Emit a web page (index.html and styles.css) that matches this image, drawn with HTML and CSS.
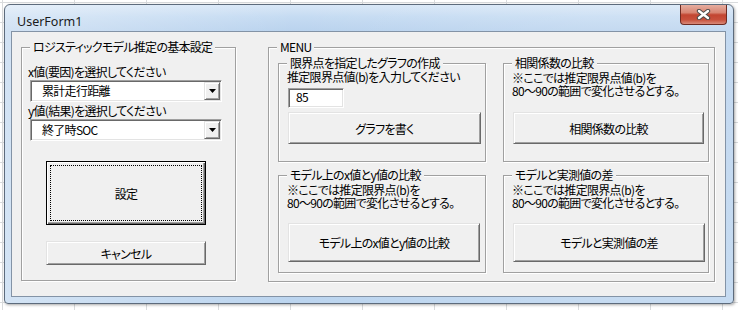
FILE: index.html
```html
<!DOCTYPE html>
<html lang="ja">

<head>
    <meta charset="UTF-8">
    <title>UserForm1</title>
    <link rel="stylesheet" href="styles.css">
</head>

<body>
    <div class="window">
        <div class="titlebar">
            <span class="title">UserForm1</span>
            <span class="close">
                <svg width="15" height="11" viewBox="0 0 15 11">
                    <path d="M3 2 L12 9 M12 2 L3 9" stroke="#4a4a4a" stroke-width="4.4" stroke-linecap="round" fill="none" />
                    <path d="M3 2 L12 9 M12 2 L3 9" stroke="#fff" stroke-width="2.4" stroke-linecap="round" fill="none" />
                </svg>
            </span>
        </div>

        <div class="client">
            <div class="frame setup">
                <div class="frame-title">ロジスティックモデル推定の基本設定</div>
                <div class="lbl lbl1">x値(要因)を選択してください</div>
                <div class="combo">
                    <span class="combo-text">累計走行距離</span>
                    <span class="drop"><svg width="7" height="4" viewBox="0 0 7 4"><polygon points="0,0 7,0 3.5,4" fill="#000" /></svg></span>
                </div>
                <div class="lbl lbl2">y値(結果)を選択してください</div>
                <div class="combo">
                    <span class="combo-text">終了時SOC</span>
                    <span class="drop"><svg width="7" height="4" viewBox="0 0 7 4"><polygon points="0,0 7,0 3.5,4" fill="#000" /></svg></span>
                </div>
                <button class="btn btn_default">設定</button>
                <button class="btn btn_cancel">キャンセル</button>
            </div>

            <div class="frame menu">
                <div class="frame-title">MENU</div>
                <div class="menu_grid">
                    <div class="frame sub">
                        <div class="frame-title">限界点を指定したグラフの作成</div>
                        <div class="lbl sub_lbl">推定限界点値(b)を入力してください</div>
                        <div class="textbox">85</div>
                        <button class="btn sub_btn btn_graph">グラフを書く</button>
                    </div>
                    <div class="frame sub">
                        <div class="frame-title">相関係数の比較</div>
                        <div class="note note_top">※ここでは推定限界点値(b)を<br>80～90の範囲で変化させるとする。</div>
                        <button class="btn sub_btn btn_top">相関係数の比較</button>
                    </div>
                    <div class="frame sub">
                        <div class="frame-title">モデル上のx値とy値の比較</div>
                        <div class="note">※ここでは推定限界点(b)を<br>80～90の範囲で変化させるとする。</div>
                        <button class="btn sub_btn btn_low">モデル上のx値とy値の比較</button>
                    </div>
                    <div class="frame sub">
                        <div class="frame-title">モデルと実測値の差</div>
                        <div class="note">※ここでは推定限界点(b)を<br>80～90の範囲で変化させるとする。</div>
                        <button class="btn sub_btn btn_low">モデルと実測値の差</button>
                    </div>
                </div>
            </div>
        </div>
    </div>
</body>

</html>
```

FILE: styles.css
```css
body {
    margin: 0;
    height: 310px;
    overflow: hidden;
    background-color: #fff;
    background-image:
        linear-gradient(to right, #d9dbdd 1px, transparent 1px),
        linear-gradient(to bottom, #d9dbdd 1px, transparent 1px);
    background-size: 72px 20px;
    background-position: 2px 2px;
    font-family: "Noto Sans CJK JP", sans-serif;
    font-size: 12px;
    font-feature-settings: "palt";
    letter-spacing: -0.7px;
    color: #000;
}

/* window frame */
.window {
    box-sizing: border-box;
    width: 730px;
    height: 300px;
    margin: 4px 0 0 4px;
    padding: 0 7px 6px 6px;
    border: 1px solid #5d6b7c;
    border-radius: 6px 6px 4px 4px;
    background:
        linear-gradient(to right, rgba(255, 255, 255, 0.35), rgba(255, 255, 255, 0) 40%, rgba(255, 255, 255, 0.15) 80%),
        linear-gradient(to bottom, #d8e7f7 0, #c5dbf2 12px, #bad3ee 26px, #bcd5ef 100%);
    box-shadow: 1px 1px 3px rgba(0, 0, 0, 0.35);
}

.titlebar {
    display: flex;
    justify-content: space-between;
    align-items: flex-start;
    height: 26px;
}

.title {
    padding: 9px 0 0 6px;
    line-height: 16px;
    font-family: "Noto Sans", sans-serif;
    font-size: 12.5px;
    letter-spacing: 0;
    color: #1a1a1a;
}

.close {
    display: flex;
    align-items: center;
    justify-content: center;
    box-sizing: border-box;
    width: 47px;
    height: 20px;
    margin-right: -1px;
    border: 1px solid #6e2b22;
    border-top: none;
    border-radius: 0 0 4px 4px;
    background: linear-gradient(to bottom, #e6ad9f 0, #d88573 40%, #c24531 52%, #c8513d 78%, #d98a79 100%);
}

.client {
    display: flex;
    align-items: flex-start;
    box-sizing: border-box;
    height: 266px;
    padding: 15px 0 0 9px;
    border: 1px solid #8393a6;
    background: #f0f0f0;
}

/* frames */
.frame {
    box-sizing: border-box;
    border: 1px solid #a0a0a0;
    box-shadow: inset 1px 1px #fff, 1px 1px #fff;
}

.frame-title {
    width: max-content;
    margin: -8px 0 0 8px;
    padding: 0 3px;
    line-height: 14px;
    background: #f0f0f0;
}

.setup {
    width: 215px;
    height: 234px;
}

.menu {
    width: 447px;
    height: 235px;
    margin-left: 32px;
}

.menu_grid {
    display: grid;
    grid-template-columns: 208px 206px;
    grid-template-rows: 99px 98px;
    column-gap: 17px;
    row-gap: 13px;
    margin: 9px 0 0 9px;
}

.lbl {
    line-height: 14px;
    padding-left: 6px;
}

.lbl1 {
    margin-top: 11px;
}

.lbl2 {
    margin-top: 2px;
}

.sub_lbl {
    padding-left: 8px;
}

.note {
    margin-top: 1px;
    padding-left: 8px;
    line-height: 13px;
    white-space: nowrap;
}

/* combo box */
.combo {
    display: flex;
    box-sizing: border-box;
    width: 192px;
    height: 22px;
    margin: 1px 0 0 8px;
    padding: 1px;
    border: 1px solid;
    border-color: #a0a0a0 #fff #fff #a0a0a0;
    box-shadow: inset 1px 1px #696969, inset -1px -1px #e3e3e3;
    background: #fff;
}

.combo-text {
    flex: 1;
    padding-left: 10px;
    line-height: 18px;
}

.drop {
    display: flex;
    align-items: center;
    justify-content: center;
    box-sizing: border-box;
    width: 16px;
    height: 18px;
    border: 1px solid;
    border-color: #e3e3e3 #696969 #696969 #e3e3e3;
    box-shadow: inset 1px 1px #fff, inset -1px -1px #a0a0a0;
    background: #f0f0f0;
}

.textbox {
    box-sizing: border-box;
    width: 56px;
    height: 20px;
    margin: 4px 0 0 9px;
    padding-left: 7px;
    line-height: 16px;
    border: 1px solid;
    border-color: #a0a0a0 #fff #fff #a0a0a0;
    box-shadow: inset 1px 1px #696969, inset -1px -1px #e3e3e3;
    background: #fff;
}

/* buttons */
.btn {
    display: block;
    box-sizing: border-box;
    padding: 0;
    font-family: inherit;
    font-size: 12px;
    font-feature-settings: "palt";
    letter-spacing: -0.7px;
    color: #000;
    background: #f0f0f0;
    border: 1px solid;
    border-color: #e3e3e3 #696969 #696969 #e3e3e3;
    box-shadow: inset 1px 1px #fff, inset -1px -1px #a0a0a0;
}

.btn_default {
    width: 160px;
    height: 64px;
    margin: 20px 0 0 24px;
    border-color: #000;
    box-shadow: inset 1px 1px #fff, inset -1px -1px #696969, inset -2px -2px #a0a0a0;
    outline: 1px dotted #000;
    outline-offset: -5px;
}

.btn_cancel {
    width: 160px;
    height: 24px;
    margin: 16px 0 0 24px;
}

.sub_btn {
    margin-left: 9px;
}

.btn_graph {
    width: 193px;
    height: 32px;
    margin-top: 4px;
}

.btn_top {
    width: 191px;
    height: 32px;
    margin-top: 15px;
}

.btn_low {
    width: 192px;
    height: 39px;
    margin-top: 14px;
}
```
